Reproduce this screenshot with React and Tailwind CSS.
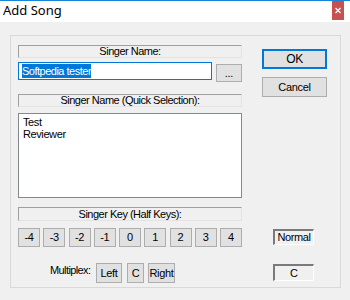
import React from "react";

const font = { fontFamily: '"Liberation Sans", Arial, sans-serif' };

function Label({ children, h = "h-[13px]", mt = "" }) {
  return (
    <div
      className={`${h} ${mt} w-[224px] flex items-center justify-center border-t border-l border-t-[#a0a0a0] border-l-[#a0a0a0] border-b border-r border-b-[#e3e3e3] border-r-[#e3e3e3] bg-[#f0f0f0] text-[11px] leading-none text-black tracking-[-0.5px]`}
    >
      {children}
    </div>
  );
}

function Btn({ children, w, h = "h-[19px]", extra = "" }) {
  return (
    <div
      className={`${w} ${h} ${extra} flex items-center justify-center bg-[#e1e1e1] border border-[#adadad] text-[11px] leading-none text-black tracking-[-0.3px]`}
    >
      {children}
    </div>
  );
}

export default function App() {
  const keys = ["-4", "-3", "-2", "-1", "0", "1", "2", "3", "4"];
  return (
    <div
      className="w-[350px] h-[300px] bg-[#f0f0f0] border-t border-[#1883d7] overflow-hidden flex flex-col"
      style={font}
    >
      <div className="h-[21px] bg-white flex items-start shrink-0">
        <div
          className="flex-1 pl-[3px] pt-[3px] text-[13px] leading-none text-black"
          style={{ fontFamily: '"Noto Sans", "Open Sans", sans-serif' }}
        >
          Add Song
        </div>
        <div className="mr-[6px] w-[12px] h-[19px] shrink-0 bg-red-700 flex items-center justify-center">
          <svg width="12" height="19" viewBox="0 0 12 19" className="block">
            <rect x="0" y="0" width="12" height="19" fill="#c75050" />
            <path d="M3.5 7 L8.5 12 M8.5 7 L3.5 12" stroke="#ffffff" strokeWidth="1.4" />
          </svg>
        </div>
      </div>
      <div className="pl-[10px] pt-[13px]">
        <div className="w-[331px] h-[253px] border border-[#d9d9d9] flex pl-[7px] pt-[9px]">
          <div className="w-[224px] flex flex-col">
            <Label>Singer Name:</Label>
            <div className="mt-[4px] h-[20px] flex items-start">
              <div className="w-[194px] h-[18px] border border-[#0078d7] bg-white flex items-center pl-[3px]">
                <span className="bg-[#0078d7] text-white text-[11px] leading-[14px] tracking-[-0.5px]">
                  Softpedia tester
                </span>
              </div>
              <Btn w="w-[26px]" h="h-[18px]" extra="ml-[4px] mt-[2px]">
                ...
              </Btn>
            </div>
            <Label mt="mt-[12px]">Singer Name (Quick Selection):</Label>
            <div className="mt-[6px] h-[85px] border border-[#828790] bg-white pl-[4px] pt-[2px] text-[11px] leading-[12px] tracking-[-0.4px] text-black">
              <div>Test</div>
              <div>Reviewer</div>
            </div>
            <Label h="h-[14px]" mt="mt-[9px]">
              Singer Key (Half Keys):
            </Label>
            <div className="mt-[7px] h-[19px] flex justify-between">
              {keys.map((k) => (
                <Btn key={k} w="w-[22px]">
                  {k}
                </Btn>
              ))}
            </div>
            <div className="mt-[16px] h-[20px] flex items-start">
              <div className="ml-[32px] w-[46px] pt-[2px] text-[11px] leading-none tracking-[-0.6px] text-black">
                Multiplex:
              </div>
              <Btn w="w-[26px]" h="h-[20px]">
                Left
              </Btn>
              <Btn w="w-[17px]" h="h-[20px]" extra="ml-[5px]">
                C
              </Btn>
              <Btn w="w-[27px]" h="h-[20px]" extra="ml-[4px]">
                Right
              </Btn>
            </div>
          </div>
          <div className="ml-[20px] w-[65px] flex flex-col">
            <Btn w="w-[65px]" h="h-[20px]" extra="mt-[4px] !border-[#0078d7] !border-2 text-[12px]">
              OK
            </Btn>
            <Btn w="w-[65px]" h="h-[20px]" extra="mt-[8px]">
              Cancel
            </Btn>
            <div className="ml-[11px] mt-[132px] w-[41px] h-[16px] border-t-2 border-l-2 border-t-[#7a7a7a] border-l-[#7a7a7a] border-b border-r border-b-white border-r-white bg-[#f0f0f0] flex items-center justify-center text-[11px] leading-none tracking-[-0.4px] text-black">
              Normal
            </div>
            <div className="ml-[11px] mt-[19px] w-[41px] h-[17px] border-t-2 border-l-2 border-t-[#7a7a7a] border-l-[#7a7a7a] border-b border-r border-b-white border-r-white bg-[#f0f0f0] flex items-center justify-center text-[11px] leading-none text-black">
              C
            </div>
          </div>
        </div>
      </div>
    </div>
  );
}
